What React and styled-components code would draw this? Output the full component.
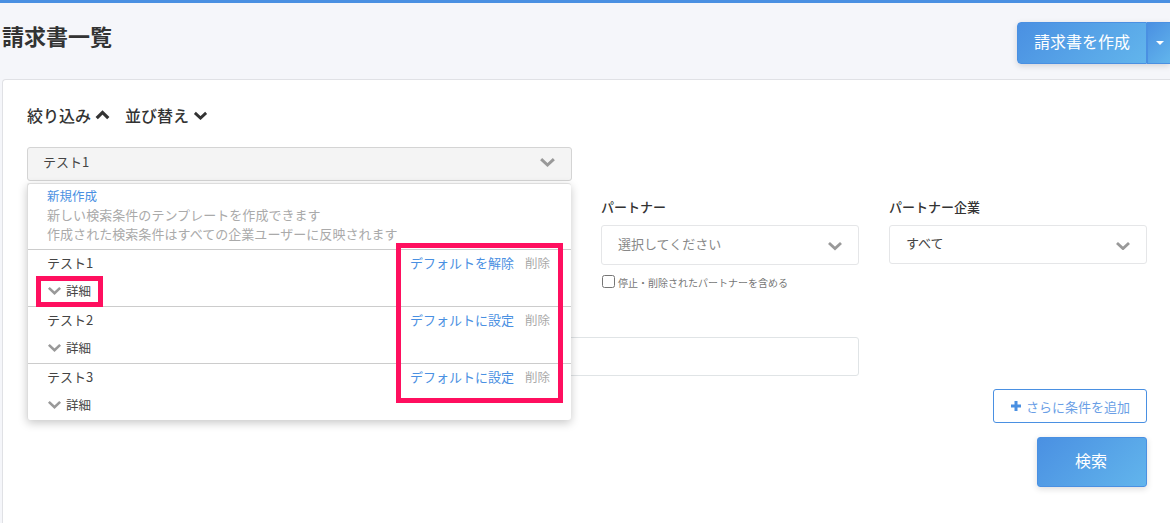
import React from "react";
import styled, { createGlobalStyle } from "styled-components";

const Global = createGlobalStyle`
  html, body { margin: 0; padding: 0; height: 100%; overflow: hidden; background: #f5f6fa; }
  * { box-sizing: border-box; }
  body { font-family: "Noto Sans CJK JP", "Noto Sans", sans-serif; color: #333; }
`;
const Page = styled.div`
  width: 1170px; height: 523px; overflow: hidden; border-top: 3px solid #4a90e2;
  display: flex; flex-direction: column; padding-left: 2px;
`;
const Header = styled.header`
  height: 76px; display: flex; justify-content: space-between; align-items: flex-start; flex: none;
`;
const Title = styled.h1`
  margin: 18px 0 0; font-size: 22px; line-height: 28px; font-weight: 700; color: #333;
`;
const SplitButton = styled.div`
  display: flex; margin-top: 19px; height: 42px; border-radius: 4px 0 0 4px;
  box-shadow: 0 2px 6px rgba(0,0,0,.14);
`;
const CreateButton = styled.button`
  width: 130px; border: 1px solid #4a90e2; border-radius: 4px 0 0 4px; padding: 0 0 4px;
  background: linear-gradient(135deg, #4a90e2, #62b5ec); color: #fff;
  font: 400 16px "Noto Sans CJK JP", sans-serif;
`;
const CaretButton = styled.button`
  width: 23px; border: 1px solid #4a90e2; border-width: 1px 0 1px 1px; padding: 0 0 0 1px;
  background: linear-gradient(135deg, #4a90e2, #62b5ec);
  display: flex; align-items: center; justify-content: center;
  &::after { content: ""; border: 4px solid transparent; border-top: 4px solid #fff; border-bottom: 0; }
`;
const Card = styled.section`
  position: relative; flex: 1; background: #fff; border: 1px solid #e0e1e5; border-right: 0; border-bottom: 0;
  border-radius: 4px 0 0 0; padding: 23px 23px 0 24px;
`;
const FilterBar = styled.div`
  display: flex; gap: 15px; height: 24px; align-items: center;
`;
const FilterToggle = styled.span`
  display: inline-flex; align-items: center; gap: 4px; font-size: 16px; font-weight: 500; color: #333; line-height: 24px;
`;
const Chevron = styled.svg`
  display: block; flex: none; fill: none; stroke: ${p => p.$color || "#999"}; stroke-width: ${p => p.$w || 2.8};
`;
const TemplateArea = styled.div`
  position: relative; margin-top: 20px; width: 545px;
`;
const TemplateSelect = styled.div`
  height: 34px; border: 1px solid #d4d4d4; border-radius: 3px; background: #f4f4f4;
  display: flex; align-items: center; justify-content: space-between; padding: 0 15px 6px 15px;
  font-size: 13px; color: #444;
  svg { margin-top: 3px; }
`;
const Menu = styled.div`
  position: absolute; top: 36px; left: 0; width: 544px; height: 237px; background: #fff; z-index: 2;
  border-radius: 3px; border: 1px solid #ddd; border-width: 1px 0 0 1px;
  box-shadow: 0 3px 10px rgba(0,0,0,.22);
`;
const NewBlock = styled.div`
  height: 66px; padding: 2px 0 0 19px; border-bottom: 1px solid #ccc; font-size: 13px; line-height: 19px;
`;
const NewLink = styled.div`
  color: #4a90e2; font-size: 12.5px;
`;
const Hint = styled.div`
  color: #aaa; letter-spacing: .05px;
`;
const Row = styled.div`
  height: 57px; padding: 3px 21px 0 19px; border-bottom: ${p => p.$last ? "0" : "1px solid #ccc"};
  display: flex; justify-content: space-between; align-items: flex-start;
`;
const RowLeft = styled.div`
  display: flex; flex-direction: column; font-size: 13px; color: #444;
`;
const RowName = styled.span`
  line-height: 19px;
`;
const Detail = styled.span`
  display: inline-flex; align-items: center; gap: 4px; margin-top: 9px; font-size: 12.5px; line-height: 19px;
`;
const RowActions = styled.div`
  display: flex; gap: 11px; font-size: 13px; line-height: 19px;
`;
const DefaultLink = styled.span`
  color: #4a90e2;
`;
const DeleteLink = styled.span`
  color: #aaa; font-size: 12.5px;
`;
const Highlight = styled.div`
  position: absolute; z-index: 3; border: 5px solid #ff0f5f; pointer-events: none;
`;
const DetailMark = styled(Highlight)`
  left: 8px; top: 92px; width: 67px; height: 31px;
`;
const ActionsMark = styled(Highlight)`
  left: 368px; top: 59px; width: 167px; height: 160px;
`;
const FormGrid = styled.div`
  display: grid; grid-template-columns: 258px 258px 258px 258px; column-gap: 30px; margin: 17px 0 0 -2px;
`;
const Field = styled.div`
  grid-column: ${p => p.$col}; display: flex; flex-direction: column;
`;
const Label = styled.label`
  font-size: 13px; font-weight: 500; color: #333; line-height: 18px; margin-bottom: 9px;
`;
const Select = styled.div`
  height: ${p => p.$h}px; border: 1px solid #e5e6e8; border-radius: 3px; background: #fff;
  display: flex; align-items: center; justify-content: space-between;
  padding: 0 15px ${p => p.$pb}px 16px; font-size: 13px; color: ${p => p.$muted ? "#888" : "#444"};
  svg { margin-top: ${p => p.$pb + 2}px; }
`;
const CheckRow = styled.div`
  display: flex; align-items: center; gap: 3px; margin-top: 9px; font-size: 10px; color: #777; height: 14px;
`;
const Check = styled.input`
  width: 13px; height: 13px; margin: 0 0 0 1px; accent-color: #777;
`;
const CheckText = styled.span`
  margin-top: 2px;
`;
const WideInput = styled.div`
  grid-column: 1 / 4; height: 39px; margin: 49px 0 0 4px; border: 1px solid #e0e4e6; border-radius: 3px; background: #fff;
`;
const ActionCol = styled.div`
  display: flex; flex-direction: column; align-items: flex-end; margin: 13px 0 0 0; gap: 14px;
`;
const AddButton = styled.button`
  width: 154px; height: 34px; border: 1px solid #4a90e2; border-radius: 3px; background: #fff; color: #6b9fe6;
  display: flex; align-items: center; justify-content: center; gap: 4px; padding: 0;
  font: 400 13px "Noto Sans CJK JP", sans-serif;
`;
const SearchButton = styled.button`
  width: 110px; height: 50px; border: 1px solid #4a90e2; border-radius: 3px; color: #fff; padding: 0 2px 5px 0;
  background: linear-gradient(135deg, #4a90e2, #62b5ec); box-shadow: 0 2px 6px rgba(0,0,0,.14);
  font: 400 16px "Noto Sans CJK JP", sans-serif;
`;

const Down = ({ size = 16, color, w }) => (
  <Chevron $color={color} $w={w} width={size} height={size * 0.6} viewBox="0 0 16 9.6">
    <path d="M2 2l6 5.6L14 2" />
  </Chevron>
);
const Up = ({ size = 15, color, w }) => (
  <Chevron $color={color} $w={w} width={size} height={size * 0.65} viewBox="0 0 14 9">
    <path d="M1.6 7.6L7 2.2l5.4 5.4" />
  </Chevron>
);
const Plus = () => (
  <svg width="12" height="12" viewBox="0 0 12 12" style={{ display: "block" }}>
    <path d="M6 1v10M1 6h10" stroke="#4a90e2" strokeWidth="3" />
  </svg>
);

const rows = [
  { name: "テスト1", action: "デフォルトを解除" },
  { name: "テスト2", action: "デフォルトに設定" },
  { name: "テスト3", action: "デフォルトに設定", last: true },
];

export default function App() {
  return (
    <Page>
      <Global />
      <Header>
        <Title>請求書一覧</Title>
        <SplitButton>
          <CreateButton>請求書を作成</CreateButton>
          <CaretButton aria-label="メニュー" />
        </SplitButton>
      </Header>
      <Card>
        <FilterBar>
          <FilterToggle>絞り込み <Up color="#333" w={3} /></FilterToggle>
          <FilterToggle>並び替え <Down size={15} color="#333" w={3} /></FilterToggle>
        </FilterBar>
        <TemplateArea>
          <TemplateSelect>テスト1<Down size={17} /></TemplateSelect>
          <Menu>
            <NewBlock>
              <NewLink>新規作成</NewLink>
              <Hint>新しい検索条件のテンプレートを作成できます</Hint>
              <Hint>作成された検索条件はすべての企業ユーザーに反映されます</Hint>
            </NewBlock>
            {rows.map(r => (
              <Row key={r.name} $last={r.last}>
                <RowLeft>
                  <RowName>{r.name}</RowName>
                  <Detail><Down size={15} />詳細</Detail>
                </RowLeft>
                <RowActions>
                  <DefaultLink>{r.action}</DefaultLink>
                  <DeleteLink>削除</DeleteLink>
                </RowActions>
              </Row>
            ))}
            <DetailMark />
            <ActionsMark />
          </Menu>
        </TemplateArea>
        <FormGrid>
          <Field $col={3}>
            <Label>パートナー</Label>
            <Select $h={40} $pb={3} $muted>選択してください<Down /></Select>
            <CheckRow><Check type="checkbox" /><CheckText>停止・削除されたパートナーを含める</CheckText></CheckRow>
          </Field>
          <Field $col={4}>
            <Label>パートナー企業</Label>
            <Select $h={39} $pb={5}>すべて<Down /></Select>
          </Field>
          <WideInput />
        </FormGrid>
        <ActionCol>
          <AddButton><Plus />さらに条件を追加</AddButton>
          <SearchButton>検索</SearchButton>
        </ActionCol>
      </Card>
    </Page>
  );
}
